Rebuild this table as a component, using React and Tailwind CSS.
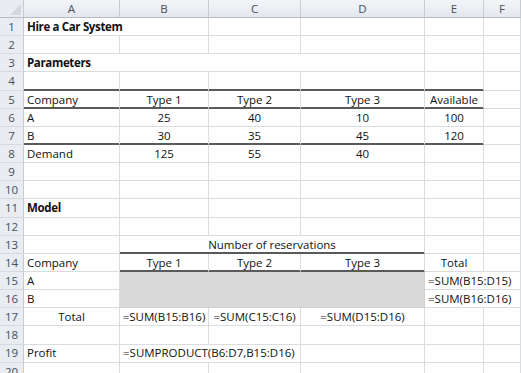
import React from 'react'
import clsx from 'clsx'

const COLS = ['A', 'B', 'C', 'D', 'E', 'F']

// one spreadsheet cell; text may spill over into empty neighbours like in Excel
function Cell({ children, align = 'left', bold = false, noR = false, thick = false, className = '' }) {
    return (
        <div
            className={clsx(
                'flex items-center whitespace-nowrap overflow-visible text-[11.5px] text-[#111] border-b',
                noR ? 'border-r-0' : 'border-r border-r-[#dadcdd]',
                thick ? 'border-b-[#5a5a5a] shadow-[inset_0_-1px_0_#5a5a5a]' : 'border-b-[#dadcdd]',
                align === 'center' ? 'justify-center px-[1px]' : 'justify-start pl-[3px]',
                bold && 'font-bold tracking-[-0.35px]',
                className
            )}
        >
            {children}
        </div>
    )
}

function RowHead({ n }) {
    return (
        <div className="flex items-center justify-center bg-[#e9ecf0] border-r border-b border-r-[#c6cbd2] border-b-[#d6dae0] text-[11.5px] text-[#46505e]">
            {n}
        </div>
    )
}

export default function App() {
    const blank = (n, from = 0) => COLS.slice(from).map((c) => <Cell key={c + n} />)

    return (
        <div className="w-[521px] h-[373px] overflow-hidden bg-white font-['Open_Sans',sans-serif]">
            <div className="grid grid-cols-[24px_96px_89px_92px_124px_59px_1fr] grid-rows-[18px_repeat(20,18.15px)]">
                {/* column headers */}
                <div className="relative bg-[#e9ecf0] border-r border-b border-r-[#c6cbd2] border-b-[#b6bcc5]">
                    <svg className="absolute right-[2px] bottom-[2px]" width="11" height="11" viewBox="0 0 11 11">
                        <polygon points="11,0 11,11 0,11" fill="#d3d7dd" />
                    </svg>
                </div>
                {COLS.map((c) => (
                    <div
                        key={c}
                        className="flex items-center justify-center bg-gradient-to-b from-[#f3f5f8] to-[#e3e7ed] border-r border-b border-r-[#c6cbd2] border-b-[#b6bcc5] text-[11.5px] text-[#46505e]"
                    >
                        {c}
                    </div>
                ))}

                {/* 1 */}
                <RowHead n={1} />
                <Cell bold noR>Hire a Car System</Cell>
                {blank(1, 1)}

                {/* 2 */}
                <RowHead n={2} />
                {blank(2)}

                {/* 3 */}
                <RowHead n={3} />
                <Cell bold noR>Parameters</Cell>
                <Cell noR />
                <Cell noR />
                <Cell />
                <Cell />
                <Cell />

                {/* 4 */}
                <RowHead n={4} />
                <Cell thick />
                <Cell thick />
                <Cell thick />
                <Cell thick />
                <Cell thick />
                <Cell />

                {/* 5 */}
                <RowHead n={5} />
                <Cell thick>Company</Cell>
                <Cell thick align="center">Type 1</Cell>
                <Cell thick align="center">Type 2</Cell>
                <Cell thick align="center">Type 3</Cell>
                <Cell thick align="center">Available</Cell>
                <Cell />

                {/* 6 */}
                <RowHead n={6} />
                <Cell>A</Cell>
                <Cell align="center">25</Cell>
                <Cell align="center">40</Cell>
                <Cell align="center">10</Cell>
                <Cell align="center">100</Cell>
                <Cell />

                {/* 7 */}
                <RowHead n={7} />
                <Cell thick>B</Cell>
                <Cell thick align="center">30</Cell>
                <Cell thick align="center">35</Cell>
                <Cell thick align="center">45</Cell>
                <Cell thick align="center">120</Cell>
                <Cell />

                {/* 8 */}
                <RowHead n={8} />
                <Cell>Demand</Cell>
                <Cell align="center">125</Cell>
                <Cell align="center">55</Cell>
                <Cell align="center">40</Cell>
                <Cell />
                <Cell />

                <RowHead n={9} />
                {blank(9)}
                <RowHead n={10} />
                {blank(10)}

                {/* 11 */}
                <RowHead n={11} />
                <Cell bold>Model</Cell>
                {blank(11, 1)}

                <RowHead n={12} />
                {blank(12)}

                {/* 13 */}
                <RowHead n={13} />
                <Cell />
                <Cell thick align="center" className="col-span-3">Number of reservations</Cell>
                <Cell />
                <Cell />

                {/* 14 */}
                <RowHead n={14} />
                <Cell>Company</Cell>
                <Cell thick align="center">Type 1</Cell>
                <Cell thick align="center">Type 2</Cell>
                <Cell thick align="center">Type 3</Cell>
                <Cell align="center">Total</Cell>
                <Cell />

                {/* 15 */}
                <RowHead n={15} />
                <Cell>A</Cell>
                <div className="col-span-3 row-span-2 bg-[#d9d9d9] border-r border-b border-r-[#d0d0d0] border-b-[#d0d0d0]" />
                <Cell noR>=SUM(B15:D15)</Cell>
                <Cell />

                {/* 16 */}
                <RowHead n={16} />
                <Cell>B</Cell>
                <Cell noR>=SUM(B16:D16)</Cell>
                <Cell />

                {/* 17 */}
                <RowHead n={17} />
                <Cell align="center">Total</Cell>
                <Cell align="center">=SUM(B15:B16)</Cell>
                <Cell align="center">=SUM(C15:C16)</Cell>
                <Cell align="center">=SUM(D15:D16)</Cell>
                <Cell />
                <Cell />

                <RowHead n={18} />
                {blank(18)}

                {/* 19 */}
                <RowHead n={19} />
                <Cell>Profit</Cell>
                <Cell noR>=SUMPRODUCT(B6:D7,B15:D16)</Cell>
                <Cell />
                <Cell />
                <Cell />
                <Cell />

                <RowHead n={20} />
                {blank(20)}
            </div>
        </div>
    )
}
